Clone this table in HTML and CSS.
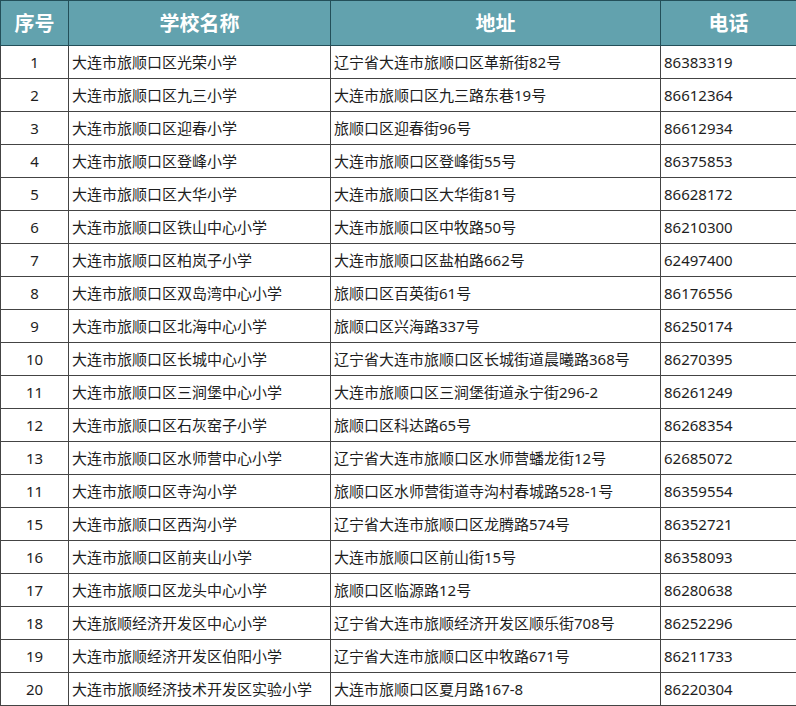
FILE: index.html
```html
<!DOCTYPE html>
<html lang="zh-CN">
<head>
<meta charset="utf-8">
<title>旅顺口区小学</title>
<link rel="stylesheet" href="styles.css">
</head>
<body>
<table class="schools">
  <colgroup>
    <col class="c-no"><col class="c-name"><col class="c-addr"><col class="c-tel">
  </colgroup>
  <thead>
    <tr><th>序号</th><th>学校名称</th><th>地址</th><th>电话</th></tr>
  </thead>
  <tbody>
    <tr><td class="no">1</td><td>大连市旅顺口区光荣小学</td><td>辽宁省大连市旅顺口区革新街82号</td><td>86383319</td></tr>
    <tr><td class="no">2</td><td>大连市旅顺口区九三小学</td><td>大连市旅顺口区九三路东巷19号</td><td>86612364</td></tr>
    <tr><td class="no">3</td><td>大连市旅顺口区迎春小学</td><td>旅顺口区迎春街96号</td><td>86612934</td></tr>
    <tr><td class="no">4</td><td>大连市旅顺口区登峰小学</td><td>大连市旅顺口区登峰街55号</td><td>86375853</td></tr>
    <tr><td class="no">5</td><td>大连市旅顺口区大华小学</td><td>大连市旅顺口区大华街81号</td><td>86628172</td></tr>
    <tr><td class="no">6</td><td>大连市旅顺口区铁山中心小学</td><td>大连市旅顺口区中牧路50号</td><td>86210300</td></tr>
    <tr><td class="no">7</td><td>大连市旅顺口区柏岚子小学</td><td>大连市旅顺口区盐柏路662号</td><td>62497400</td></tr>
    <tr><td class="no">8</td><td>大连市旅顺口区双岛湾中心小学</td><td>旅顺口区百英街61号</td><td>86176556</td></tr>
    <tr><td class="no">9</td><td>大连市旅顺口区北海中心小学</td><td>旅顺口区兴海路337号</td><td>86250174</td></tr>
    <tr><td class="no">10</td><td>大连市旅顺口区长城中心小学</td><td>辽宁省大连市旅顺口区长城街道晨曦路368号</td><td>86270395</td></tr>
    <tr><td class="no">11</td><td>大连市旅顺口区三涧堡中心小学</td><td>大连市旅顺口区三涧堡街道永宁街296-2</td><td>86261249</td></tr>
    <tr><td class="no">12</td><td>大连市旅顺口区石灰窑子小学</td><td>旅顺口区科达路65号</td><td>86268354</td></tr>
    <tr><td class="no">13</td><td>大连市旅顺口区水师营中心小学</td><td>辽宁省大连市旅顺口区水师营蟠龙街12号</td><td>62685072</td></tr>
    <tr><td class="no">11</td><td>大连市旅顺口区寺沟小学</td><td>旅顺口区水师营街道寺沟村春城路528-1号</td><td>86359554</td></tr>
    <tr><td class="no">15</td><td>大连市旅顺口区西沟小学</td><td>辽宁省大连市旅顺口区龙腾路574号</td><td>86352721</td></tr>
    <tr><td class="no">16</td><td>大连市旅顺口区前夹山小学</td><td>大连市旅顺口区前山街15号</td><td>86358093</td></tr>
    <tr><td class="no">17</td><td>大连市旅顺口区龙头中心小学</td><td>旅顺口区临源路12号</td><td>86280638</td></tr>
    <tr><td class="no">18</td><td>大连旅顺经济开发区中心小学</td><td>辽宁省大连市旅顺经济开发区顺乐街708号</td><td>86252296</td></tr>
    <tr><td class="no">19</td><td>大连市旅顺经济开发区伯阳小学</td><td>辽宁省大连市旅顺口区中牧路671号</td><td>86211733</td></tr>
    <tr><td class="no">20</td><td>大连市旅顺经济技术开发区实验小学</td><td>大连市旅顺口区夏月路167-8</td><td>86220304</td></tr>
  </tbody>
</table>
</body>
</html>
```

FILE: styles.css
```css
html, body {
  margin: 0;
  padding: 0;
  background: #ffffff;
}

.schools {
  border-collapse: collapse;
  table-layout: fixed;
  width: 796px;
  font-family: "Noto Sans", "Noto Sans CJK SC", sans-serif;
  font-size: 15px;
  color: #1e1e1e;
}

.c-no { width: 68px; }
.c-name { width: 262px; }
.c-addr { width: 330px; }
.c-tel { width: 136px; }

.schools th {
  height: 44px;
  padding: 0;
  background: #62a2ae;
  color: #ffffff;
  font-family: "Noto Sans CJK SC", sans-serif;
  font-size: 20px;
  font-weight: bold;
  text-align: center;
  border: 1px solid #234f59;
  line-height: 1;
}

.schools td {
  height: 32px;
  padding: 0 0 0 3px;
  border: 1px solid #444444;
  white-space: nowrap;
  overflow: hidden;
  line-height: 1;
  vertical-align: middle;
}

.schools td.no {
  text-align: center;
  padding: 0;
}
```
